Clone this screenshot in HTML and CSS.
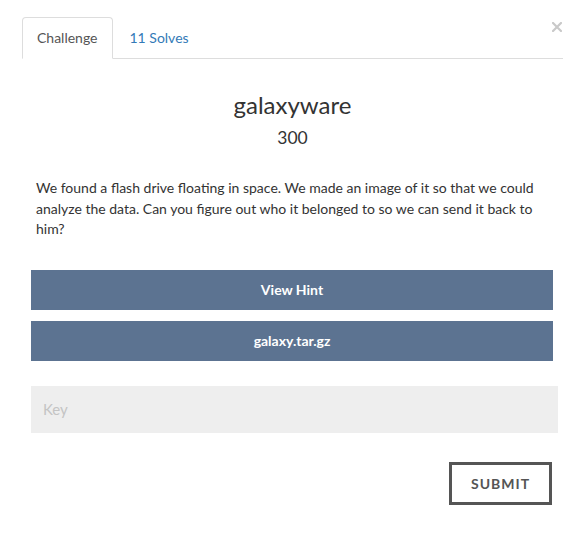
FILE: index.html
```html
<!DOCTYPE html>
<html>
<head>
<meta charset="utf-8">
<link rel="stylesheet" href="styles.css">
</head>
<body>
<div class="modal">
  <button class="close" aria-label="Close">
    <svg width="10" height="10" viewBox="0 0 10 10"><path d="M1 1L9 9M9 1L1 9" stroke="#c9c9c9" stroke-width="2.2" stroke-linecap="square"/></svg>
  </button>
  <ul class="tabs">
    <li class="tab active"><a>Challenge</a></li>
    <li class="tab"><a class="link">11 Solves</a></li>
  </ul>
  <div class="content">
    <h3 class="title">galaxyware</h3>
    <h4 class="value">300</h4>
    <p class="desc">We found a flash drive floating in space. We made an image of it so that we could analyze the data. Can you figure out who it belonged to so we can send it back to him?</p>
    <div class="actions">
      <div class="btn-wide">View Hint</div>
      <div class="btn-wide">galaxy.tar.gz</div>
    </div>
    <div class="key">Key</div>
    <div class="submit-row">
      <div class="submit">SUBMIT</div>
    </div>
  </div>
</div>
</body>
</html>
```
FILE: styles.css
```css
html, body {
  margin: 0;
  background: #fff;
}
body {
  font-family: Lato, "Open Sans", sans-serif;
  color: #333;
  font-size: 14px;
}
.modal {
  position: relative;
  padding: 17px 25px 30px 22px;
}
.close {
  position: absolute;
  top: 22px;
  left: 552px;
  width: 10px;
  height: 10px;
  padding: 0;
  margin: 0;
  border: 0;
  background: none;
  line-height: 0;
}
.tabs {
  display: flex;
  list-style: none;
  margin: 0;
  padding: 0;
  border-bottom: 1px solid #ddd;
}
.tab {
  margin-bottom: -1px;
}
.tab a {
  display: block;
  padding: 10px 14px;
  line-height: 20px;
  margin-right: 2px;
  border: 1px solid transparent;
  border-radius: 4px 4px 0 0;
  font-size: 14px;
  color: #337ab7;
}
.tab.active a {
  border-color: #ddd #ddd transparent;
  background: #fff;
  color: #555;
}
.title {
  margin: 33px 0 0;
  font-size: 24px;
  line-height: 26px;
  font-weight: 400;
  text-align: center;
}
.value {
  margin: 10px 0 0;
  font-size: 17.5px;
  line-height: 20px;
  font-weight: 400;
  text-align: center;
}
.desc {
  margin: 30px 15px 0 14px;
  line-height: 20.5px;
}
.actions {
  display: flex;
  flex-direction: column;
  gap: 11px;
  margin: 30px 10px 0 9px;
}
.btn-wide {
  height: 40px;
  background: #5c7391;
  color: #fff;
  font-weight: 700;
  display: flex;
  align-items: center;
  justify-content: center;
}
.key {
  margin: 25px 5px 0 9px;
  height: 47px;
  background: #eee;
  color: #c4c4c4;
  font-size: 15px;
  display: flex;
  align-items: center;
  padding-left: 12px;
}
.submit-row {
  display: flex;
  justify-content: flex-end;
  margin: 29px 11px 0 0;
}
.submit {
  width: 97px;
  height: 37px;
  border: 3px solid #555;
  display: flex;
  align-items: center;
  justify-content: center;
  font-weight: 700;
  letter-spacing: 1px;
  color: #555;
}
```
